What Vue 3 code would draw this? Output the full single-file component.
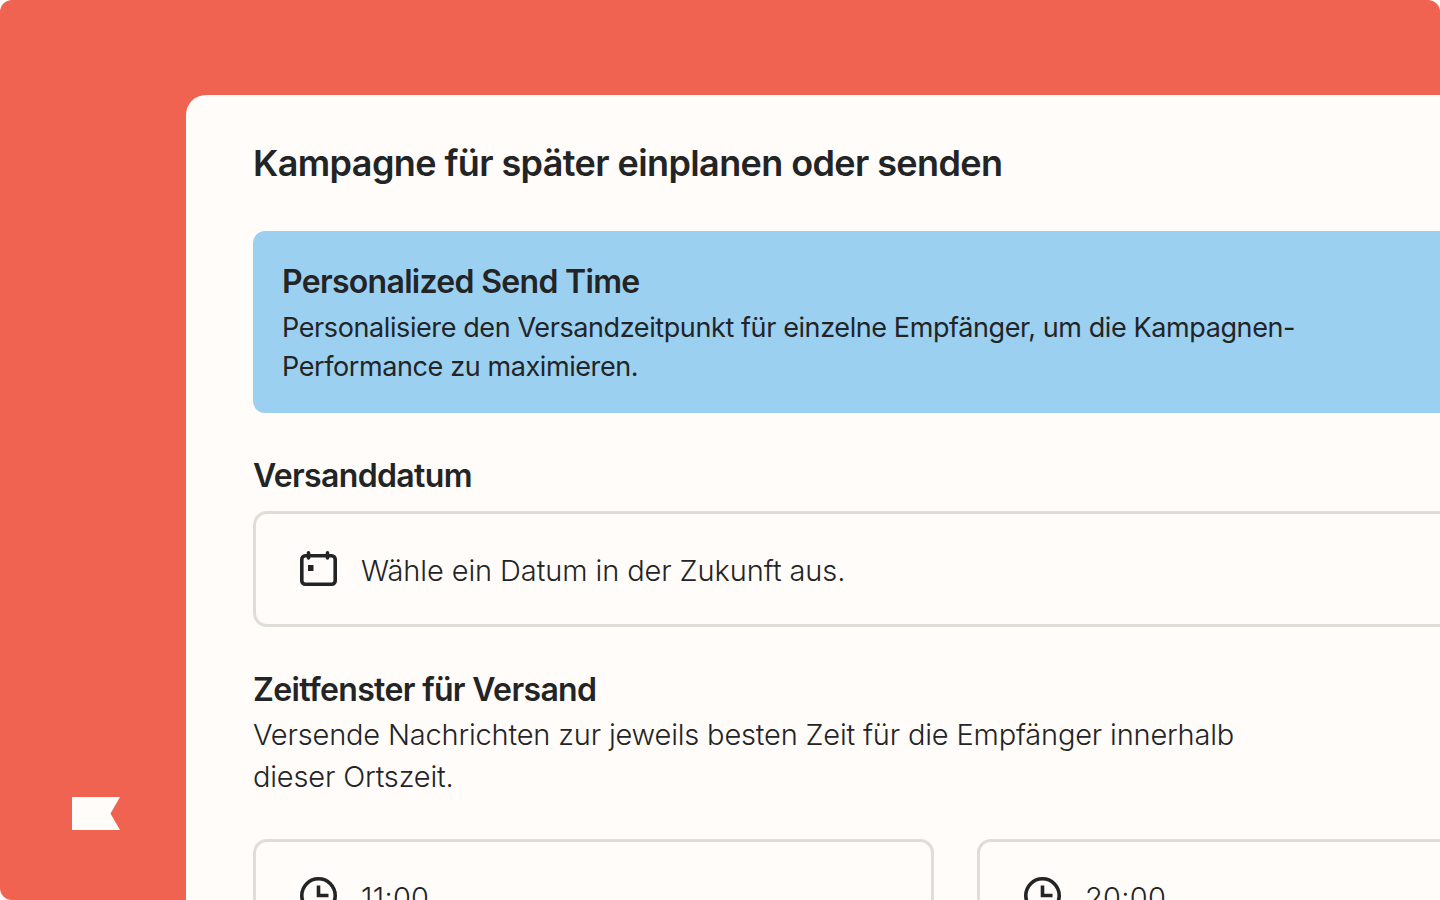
<script setup>
const times = ['11:00', '20:00'];
</script>

<template>
  <div class="frame">
    <aside class="rail">
      <svg class="logo" width="48" height="33" viewBox="0 0 48 33">
        <path d="M0 0H48L38.500 16.500L48 33H0Z" fill="#fffcf9" />
      </svg>
    </aside>
    <main class="panel">
      <div class="content">
        <h1>Kampagne für später einplanen oder senden</h1>

        <section class="notice">
          <h2>Personalized Send Time</h2>
          <p>Personalisiere den Versandzeitpunkt für einzelne Empfänger, um die Kampagnen-<br />Performance zu maximieren.</p>
        </section>

        <h3 class="label">Versanddatum</h3>
        <div class="field date">
          <svg class="icon" width="38" height="36" viewBox="0 0 38 36" fill="none" stroke="#232426" stroke-width="3.600">
            <rect x="1.800" y="4.800" width="33.400" height="28.400" rx="3.500" />
            <path d="M8.500 1.800V7M27.500 1.800V7" stroke-linecap="round" />
            <rect x="8" y="14" width="5.500" height="6" fill="#232426" stroke="none" />
          </svg>
          <span>Wähle ein Datum in der Zukunft aus.</span>
        </div>

        <h3 class="label window">Zeitfenster für Versand</h3>
        <p class="hint">Versende Nachrichten zur jeweils besten Zeit für die Empfänger innerhalb<br />dieser Ortszeit.</p>

        <div class="times">
          <div v-for="time in times" :key="time" class="field time">
            <svg class="icon" width="38" height="38" viewBox="0 0 38 38" fill="none" stroke="#232426" stroke-width="3.600">
              <circle cx="18.500" cy="18.500" r="16.700" />
              <path d="M18.500 8.500V18.500H28.500" />
            </svg>
            <span>{{ time }}</span>
          </div>
        </div>
      </div>
    </main>
  </div>
</template>

<style>
html,
body {
  margin: 0;
  background: #fffcf9;
}
</style>

<style scoped>
.frame {
  display: flex;
  width: 1440px;
  height: 900px;
  overflow: hidden;
  background: #f06351;
  border-radius: 12px 12px 0 12px;
  font-family: Inter, "Liberation Sans", sans-serif;
  color: #232426;
}

.rail {
  display: flex;
  flex: 0 0 186px;
  align-items: flex-end;
  box-sizing: border-box;
  padding: 0 0 70px 72px;
}

.logo {
  display: block;
}

.panel {
  flex: 1;
  margin-top: 95px;
  overflow: hidden;
  background: #fffcf9;
  border-top-left-radius: 20px;
}

.content {
  width: 1400px;
  padding: 46px 0 0 67px;
}

h1 {
  margin: 0 0 46px;
  font-size: 36px;
  line-height: 44px;
  font-weight: 600;
  letter-spacing: -0.6px;
}

.notice {
  box-sizing: border-box;
  height: 182px;
  padding: 31px 29px 0;
  background: #9bd0f1;
  border-radius: 12px 0 0 12px;
}

h2 {
  margin: 0 0 6px;
  font-size: 32px;
  line-height: 40px;
  font-weight: 600;
  letter-spacing: -0.7px;
}

.notice p {
  margin: 0;
  font-size: 27px;
  line-height: 39px;
  letter-spacing: -0.4px;
}

.label {
  margin: 43px 0 15px;
  font-size: 32px;
  line-height: 40px;
  font-weight: 600;
  letter-spacing: -0.65px;
}

.label.window {
  margin: 43px 0 0;
}

.hint {
  margin: 4px 0 41px;
  font-size: 29px;
  line-height: 42px;
  font-weight: 300;
  letter-spacing: -0.18px;
}

.field {
  display: flex;
  align-items: center;
  gap: 23px;
  box-sizing: border-box;
  height: 116px;
  padding-left: 44px;
  background: #fffcf9;
  border: 3px solid #e1dcd5;
  border-radius: 14px;
  font-size: 29px;
  font-weight: 300;
  letter-spacing: -0.1px;
}

.field span {
  padding-top: 2px;
}

.icon {
  flex: none;
}

.time span {
  padding-top: 0;
  letter-spacing: 0.3px;
}

.time .icon {
  margin-bottom: 2px;
}

.times {
  display: grid;
  grid-template-columns: 681px 1fr;
  gap: 43px;
}
</style>
